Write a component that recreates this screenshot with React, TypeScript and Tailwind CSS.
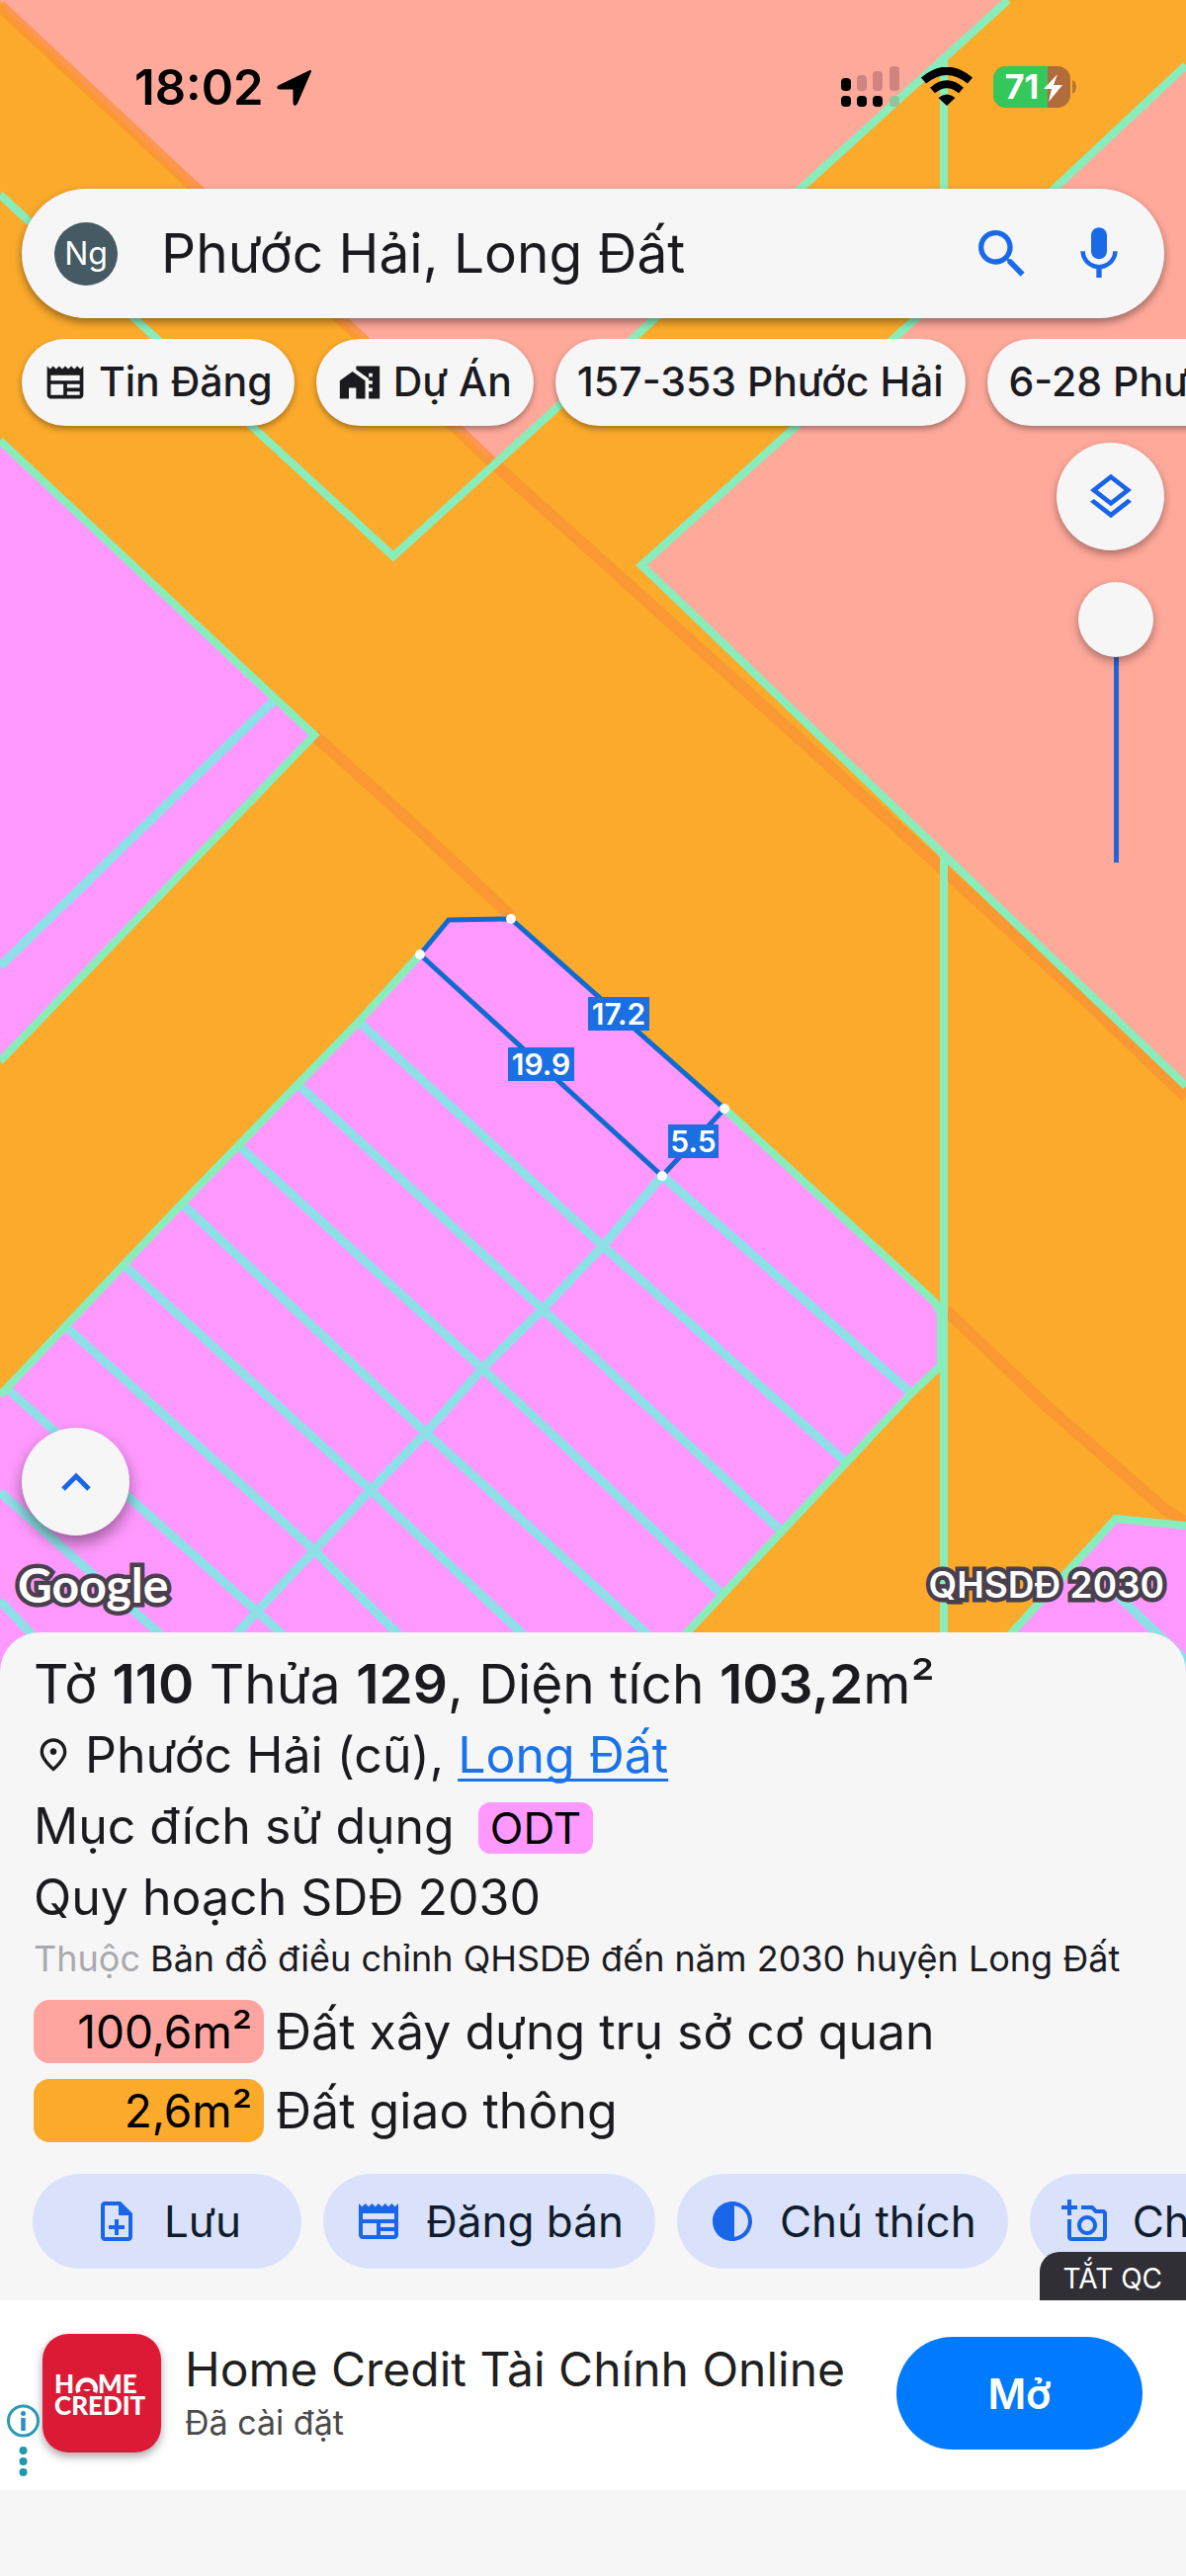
import React from "react";
import {
  MdContrast,
  MdHomeWork,
  MdMic,
  MdNewspaper,
  MdOutlineAddAPhoto,
  MdOutlineLayers,
  MdOutlineNoteAdd,
  MdOutlinePlace,
  MdSearch,
} from "react-icons/md";

const SELECTED = "425,966 454,931 517,930 733,1122 670,1190";

const PARCEL_LINES = [
  "M670 1190L922 1410",
  "M363 1034L610 1261L856 1480",
  "M301 1097L549 1325L790 1549",
  "M243 1161L488 1385L731 1614",
  "M184 1218L431 1450L654 1653L700 1695",
  "M125 1280L375 1508L528 1653L574 1695",
  "M67 1343L318 1569L402 1653L448 1695",
  "M9 1407L260 1631L331 1695",
  "M0 1510L160 1652L208 1695",
  "M0 1620L30 1652L70 1695",
  "M670 1190L610 1261L549 1325L488 1385L431 1450L375 1508L318 1569L260 1631L202 1695",
  "M277 709L0 978",
  "M1128 1612L1215 1695",
];

const EDGE_LINES = [
  "M0 197L398 563L662 323L811 190L1020 0",
  "M1200 66L926 323L649 572L957 867L1200 1099",
  "M955 60V300",
  "M955 867V1695",
  "M0 446L318 744L0 1074",
  "M425 966L363 1034L184 1218L0 1412",
  "M733 1122L946 1318L952 1330V1382L922 1410L731 1614L655 1695",
  "M1200 1544L1129 1537L985 1695",
];

const DISTANCES = [
  { text: "17.2", x: 595, y: 1009, w: 62 },
  { text: "19.9", x: 514, y: 1060, w: 67 },
  { text: "5.5", x: 676, y: 1138, w: 51 },
];

const CORNERS = [
  [425, 966],
  [517, 930],
  [733, 1122],
  [670, 1190],
];

function LandMap() {
  return (
    <svg
      className="absolute inset-0 h-full w-full"
      viewBox="0 0 1200 1692"
      preserveAspectRatio="xMidYMin slice"
      role="img"
      aria-label="Bản đồ quy hoạch"
    >
      <rect width="1200" height="1692" fill="#fbaa2b" />
      <g fill="#ffa99b">
        <path d="M0 0L8 13L195 190L345 323L497 467L662 323L811 190L1020 0Z" />
        <path d="M1200 66L926 323L649 572L957 867L1200 1099Z" />
      </g>
      <g fill="#ff99ff">
        <path d="M0 446L318 744L0 1074Z" />
        <path d="M425 966L454 931L517 930L948 1318L955 1330V1382L922 1410L655 1695H0V1412Z" />
        <path d="M1200 1544L1129 1537L985 1695H1200Z" />
      </g>
      <g fill="none" stroke="#fa9236" strokeWidth="12" opacity="0.75">
        <path d="M0 6L195 188L345 323L497 467L612 570L796 736L949 875L1102 1016L1200 1110" />
        <path d="M318 744L420 836L517 927" />
        <path d="M957 1326L1060 1424L1178 1527L1200 1541" />
      </g>
      <g fill="none" stroke="#8ce0e6" strokeWidth="9">
        {PARCEL_LINES.map((d) => (
          <path key={d} d={d} />
        ))}
      </g>
      <g fill="none" stroke="#88edbb" strokeWidth="8">
        {EDGE_LINES.map((d) => (
          <path key={d} d={d} />
        ))}
      </g>
      <polygon points={SELECTED} fill="none" stroke="#0f6bd0" strokeWidth="5" />
      {CORNERS.map(([x, y]) => (
        <circle key={x} cx={x} cy={y} r="5" fill="#fff" />
      ))}
      {DISTANCES.map((d) => (
        <g key={d.text}>
          <rect x={d.x} y={d.y} width={d.w} height="34" fill="#1a6fe3" />
          <text
            x={d.x + d.w / 2}
            y={d.y + 28}
            textAnchor="middle"
            fill="#fff"
            fontSize="30"
            fontWeight="600"
            fontFamily="Inter, sans-serif"
          >
            {d.text}
          </text>
        </g>
      ))}
    </svg>
  );
}

function StatusBar() {
  const bars = [
    { x: 0, y: 12, on: true },
    { x: 16, y: 9, on: false },
    { x: 32, y: 5, on: false },
    { x: 49, y: 0, on: false },
  ];
  return (
    <div className="flex h-[191px] items-start justify-between pt-[64px] pr-[111px] pl-[136px]">
      <div className="flex items-center gap-3">
        <span className="text-[49px] leading-[50px] font-semibold text-black">18:02</span>
        <svg width="37" height="38" viewBox="0 0 37 38" aria-hidden="true">
          <path d="M35 2L3 17.500Q1 19 4 19.500H17Q18.500 19.500 18.500 21V34Q19 37.500 21 34.500Z" fill="#000" stroke="#000" strokeWidth="2" strokeLinejoin="round" />
        </svg>
      </div>
      <div className="flex h-12 items-center">
        <svg className="mr-5" width="60" height="42" viewBox="0 0 60 42" aria-hidden="true">
          {bars.map((b, i) => (
            <g key={b.x}>
              <rect x={b.x} y={b.y} width="10" height={25 - b.y} rx="4" fill={b.on ? "#000" : "#d08480"} />
              <rect x={b.x} y="30" width="10" height="11" rx="4" fill={i < 3 ? "#000" : "#8fc69c"} />
            </g>
          ))}
        </svg>
        <svg className="mr-5" width="54" height="40" viewBox="0 0 54 40" aria-hidden="true">
          <path d="M3.500 13.500Q27 -6 50.500 13.500" fill="none" stroke="#000" strokeWidth="8" />
          <path d="M12.500 23.500Q27 11 41.500 23.500" fill="none" stroke="#000" strokeWidth="7.500" />
          <path d="M27 39L18.500 31Q27 24 35.500 31Z" fill="#000" />
        </svg>
        <svg width="84" height="42" viewBox="0 0 84 42" aria-hidden="true">
          <defs>
            <clipPath id="battery">
              <rect width="78" height="42" rx="13" />
            </clipPath>
          </defs>
          <g clipPath="url(#battery)">
            <rect width="78" height="42" fill="#b06c3a" />
            <rect width="55" height="42" fill="#34c759" />
          </g>
          <path d="M80 14Q84 16 84 21T80 28Z" fill="#b5782e" />
          <text x="29" y="33" textAnchor="middle" fill="#fff" fontSize="34" fontWeight="700" fontFamily="Inter, sans-serif">
            71
          </text>
          <path d="M65 8L51 23H59L56 36L70 19H61Z" fill="#fff" />
        </svg>
      </div>
    </div>
  );
}

function SearchBar() {
  return (
    <form className="mx-[22px] flex h-[131px] items-center rounded-full bg-[#f6f6f7] pr-[34px] pl-[33px] shadow-[0_4px_8px_rgba(0,0,0,0.4)]">
      <button type="button" className="h-16 w-16 shrink-0 rounded-full bg-[#455a62] text-[32px] text-white">
        Ng
      </button>
      <input
        aria-label="Tìm kiếm"
        defaultValue="Phước Hải, Long Đất"
        className="ml-[44px] min-w-0 flex-1 bg-transparent text-[55px] text-[#1b1b1f] outline-none"
      />
      <button type="submit" aria-label="Tìm" className="text-[#1a6ae8]">
        <MdSearch className="h-16 w-16" />
      </button>
      <button type="button" aria-label="Giọng nói" className="ml-[34px] text-[#1a6ae8]">
        <MdMic className="h-16 w-16" />
      </button>
    </form>
  );
}

function Chip({ icon, children }: { icon?: React.ReactNode; children: React.ReactNode }) {
  return (
    <button
      type="button"
      className="flex h-[88px] shrink-0 items-center gap-3 rounded-full bg-[#f6f6f7] px-[22px] text-[41px] font-medium whitespace-nowrap text-[#1b1b1f] shadow-[0_3px_6px_rgba(0,0,0,0.35)]"
    >
      {icon}
      {children}
    </button>
  );
}

function MapControls() {
  return (
    <div className="mt-[17px] flex flex-col items-end pr-[22px]">
      <button
        type="button"
        aria-label="Lớp bản đồ"
        className="flex h-[109px] w-[109px] items-center justify-center rounded-full bg-[#f6f6f7] text-[#1a62e8] shadow-[0_4px_8px_rgba(0,0,0,0.35)]"
      >
        <MdOutlineLayers className="h-14 w-14" />
      </button>
      <input
        type="range"
        min={0}
        max={100}
        defaultValue={0}
        aria-label="Độ mờ"
        className="mt-8 mr-[11px] h-[284px] w-[76px] appearance-none bg-transparent [writing-mode:vertical-lr] [&::-webkit-slider-runnable-track]:h-full [&::-webkit-slider-runnable-track]:w-[76px] [&::-webkit-slider-runnable-track]:bg-[linear-gradient(#2563d8,#2563d8)] [&::-webkit-slider-runnable-track]:bg-[length:5px_100%] [&::-webkit-slider-runnable-track]:bg-center [&::-webkit-slider-runnable-track]:bg-no-repeat [&::-webkit-slider-thumb]:h-[76px] [&::-webkit-slider-thumb]:w-[76px] [&::-webkit-slider-thumb]:appearance-none [&::-webkit-slider-thumb]:rounded-full [&::-webkit-slider-thumb]:bg-[#f6f6f7] [&::-webkit-slider-thumb]:shadow-[0_4px_10px_rgba(0,0,0,0.35)]"
      />
    </div>
  );
}

function ParcelSheet() {
  return (
    <section className="relative -mt-10 rounded-t-[40px] bg-[#f6f6f7] pt-4 pb-8 text-[#1b1b1f]">
      <div className="px-[34px]">
        <h1 className="text-[55px] leading-[72px] whitespace-nowrap">
          Tờ <b className="font-semibold">110</b> Thửa <b className="font-semibold">129</b>, Diện tích{" "}
          <b className="font-semibold">103,2</b>m²
        </h1>
        <p className="flex items-center text-[50px] leading-[72px] whitespace-nowrap">
          <MdOutlinePlace className="mr-3 h-10 w-10" />
          Phước Hải (cũ),&nbsp;
          <a href="#long-dat" className="text-[#1a73e8] underline decoration-[3px] underline-offset-[6px] [text-decoration-skip-ink:none]">
            Long Đất
          </a>
        </p>
        <p className="flex items-center text-[50px] leading-[72px] whitespace-nowrap">
          Mục đích sử dụng
          <span className="mt-1 ml-6 rounded-xl bg-[#ff99ff] px-3 text-[44px] leading-[52px] text-black">ODT</span>
        </p>
        <p className="text-[50px] leading-[72px] whitespace-nowrap">Quy hoạch SDĐ 2030</p>
        <p className="text-[36px] leading-[52px] whitespace-nowrap">
          <span className="text-[#a9a9ad]">Thuộc</span> Bản đồ điều chỉnh QHSDĐ đến năm 2030 huyện Long Đất
        </p>
        <ul className="mt-4 flex flex-col gap-4 text-[50px] leading-[64px] whitespace-nowrap">
          <li className="flex gap-3">
            <span className="h-16 w-[233px] rounded-2xl bg-[#ffa49f] pr-3 text-right text-[46px] text-black">100,6m²</span>
            Đất xây dựng trụ sở cơ quan
          </li>
          <li className="flex gap-3">
            <span className="h-16 w-[233px] rounded-2xl bg-[#fbaa2b] pr-3 text-right text-[46px] text-black">2,6m²</span>
            Đất giao thông
          </li>
        </ul>
      </div>
      <div className="mt-8 flex gap-[22px] overflow-hidden pl-[33px]">
        <ActionButton icon={<MdOutlineNoteAdd className="h-12 w-12 text-[#1a66e8]" />}>Lưu</ActionButton>
        <ActionButton icon={<MdNewspaper className="h-12 w-12 text-[#1a66e8]" />}>Đăng bán</ActionButton>
        <ActionButton icon={<MdContrast className="h-12 w-12 text-[#1a66e8]" />}>Chú thích</ActionButton>
        <ActionButton icon={<MdOutlineAddAPhoto className="h-12 w-12 text-[#1a66e8]" />}>Chụp ảnh</ActionButton>
      </div>
      <button
        type="button"
        className="absolute right-0 bottom-0 h-[49px] rounded-tl-[20px] bg-[#302f36] px-6 pt-1 text-[28px] text-white"
      >
        TẮT QC
      </button>
    </section>
  );
}

function ActionButton({ icon, children }: { icon: React.ReactNode; children: React.ReactNode }) {
  return (
    <button
      type="button"
      className="flex h-24 min-w-[272px] shrink-0 items-center justify-center gap-6 rounded-full bg-[#dae2fb] px-8 text-[44px] whitespace-nowrap text-[#101c2b]"
    >
      {icon}
      {children}
    </button>
  );
}

function AdBanner() {
  return (
    <aside className="relative flex h-48 items-center bg-white pr-[44px] pb-1 pl-[43px]">
      <button type="button" aria-label="Thông tin quảng cáo" className="absolute top-[105px] left-[7px]">
        <svg width="33" height="76" viewBox="0 0 33 76">
          <circle cx="16.500" cy="17" r="15" fill="#fff" stroke="#2a9bb0" strokeWidth="3" />
          <circle cx="16.500" cy="9.500" r="2.500" fill="#2a8fc8" />
          <path d="M16.500 14V27" stroke="#2a8fc8" strokeWidth="4.500" />
          <circle cx="16.500" cy="47" r="4" fill="#2397ad" />
          <circle cx="16.500" cy="58" r="4" fill="#2397ad" />
          <circle cx="16.500" cy="69" r="4" fill="#2397ad" />
        </svg>
      </button>
      <svg className="shrink-0 rounded-[26px] shadow-[0_4px_10px_rgba(0,0,0,0.35)]" width="120" height="120" viewBox="0 0 120 120" role="img" aria-label="Home Credit">
        <rect width="120" height="120" fill="#dc1a35" />
        <g fill="#fff" fontFamily="Lato, sans-serif" fontWeight="900" fontSize="26">
          <text x="12" y="60">H</text>
          <text x="56" y="60">ME</text>
          <text x="12" y="82">CREDIT</text>
        </g>
        <path d="M36.500 59A9 9 0 1 1 53 59" fill="none" stroke="#fff" strokeWidth="4.500" />
        <path d="M41 56Q45 60 49 56Z" fill="#fff" />
      </svg>
      <div className="ml-[24px] min-w-0 flex-1 whitespace-nowrap">
        <p className="text-[48px] leading-[60px] text-[#1f1f1f]">Home Credit Tài Chính Online</p>
        <p className="text-[34px] leading-[48px] text-[#4a4a4a]">Đã cài đặt</p>
      </div>
      <button type="button" className="h-[114px] w-[249px] shrink-0 rounded-full bg-[#007aff] text-[42px] font-semibold text-white">
        Mở
      </button>
    </aside>
  );
}

export default function App() {
  return (
    <main className="flex min-h-screen flex-col overflow-hidden bg-[#f6f6f7] pb-[87px] font-['Inter',sans-serif]">
      <section className="relative flex flex-1 flex-col">
        <LandMap />
        <div className="relative flex flex-1 flex-col">
          <StatusBar />
          <SearchBar />
          <nav className="mt-[21px] flex gap-[22px] overflow-hidden px-[22px] pb-3">
            <Chip icon={<MdNewspaper className="h-11 w-11" />}>Tin Đăng</Chip>
            <Chip icon={<MdHomeWork className="h-11 w-11" />}>Dự Án</Chip>
            <Chip>157-353 Phước Hải</Chip>
            <Chip>6-28 Phước Hải</Chip>
          </nav>
          <div className="-mt-3">
            <MapControls />
          </div>
          <div className="mt-auto pr-[22px] pb-[58px] pl-[22px]">
            <button
              type="button"
              aria-label="Mở rộng"
              className="flex h-[109px] w-[109px] items-center justify-center rounded-full bg-[#f6f6f7] shadow-[0_8px_16px_rgba(0,0,0,0.4)]"
            >
              <svg width="32" height="20" viewBox="0 0 32 20" aria-hidden="true">
                <path d="M3 17L16 4L29 17" fill="none" stroke="#1a66e8" strokeWidth="5" />
              </svg>
            </button>
            <div className="mt-5 -ml-1 flex items-center justify-between leading-[60px] text-white [paint-order:stroke_fill] [-webkit-text-stroke:9px_#4a3f4c]">
              <span className="font-['Lato',sans-serif] text-[48px] font-bold">Google</span>
              <span className="text-[37px] font-semibold">QHSDĐ 2030</span>
            </div>
          </div>
        </div>
      </section>
      <ParcelSheet />
      <AdBanner />
    </main>
  );
}
